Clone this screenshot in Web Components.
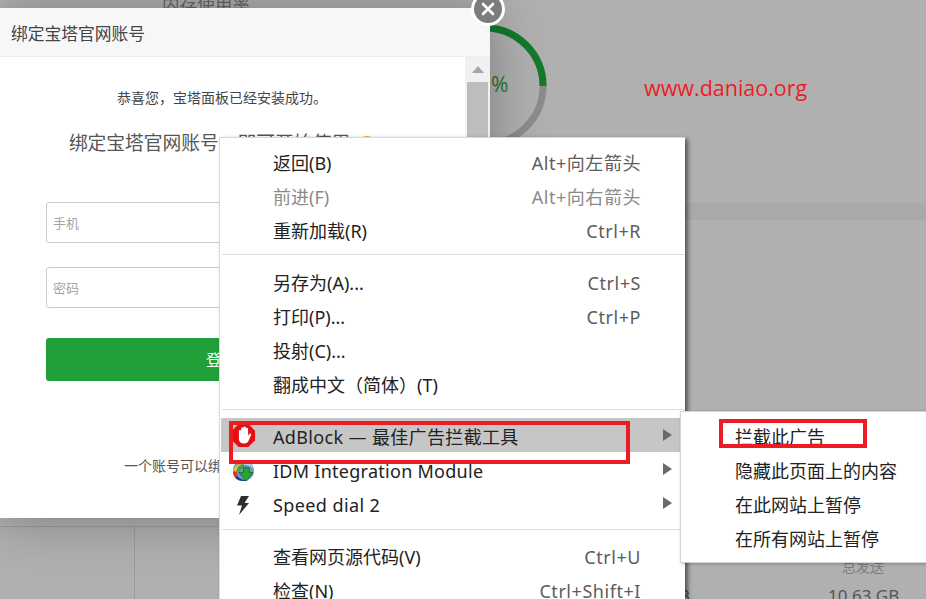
<!DOCTYPE html>
<html lang="zh">
<head>
<meta charset="utf-8">
<title>绑定宝塔官网账号</title>
<style>
  html, body { margin: 0; height: 100%; overflow: hidden; }
  body { width: 926px; height: 599px; position: relative; font-family: "Noto Sans", "Noto Sans CJK SC", sans-serif; }
</style>
</head>
<body>
<panel-backdrop></panel-backdrop>

<login-dialog title-text="绑定宝塔官网账号"></login-dialog>

<context-menu>
  <menu-row key="Alt+向左箭头">返回(B)</menu-row>
  <menu-row key="Alt+向右箭头" disabled>前进(F)</menu-row>
  <menu-row key="Ctrl+R">重新加载(R)</menu-row>
  <menu-sep style="--above:6px;--below:11px"></menu-sep>
  <menu-row key="Ctrl+S">另存为(A)...</menu-row>
  <menu-row key="Ctrl+P">打印(P)...</menu-row>
  <menu-row>投射(C)...</menu-row>
  <menu-row>翻成中文（简体）(T)</menu-row>
  <menu-sep></menu-sep>
  <menu-row arrow active style="letter-spacing:.35px">
    <svg slot="icon" width="25" height="25" viewBox="0 0 26 26">
      <polygon points="8,1 18,1 25,8 25,18 18,25 8,25 1,18 1,8" fill="#e60e12"/>
      <path d="M8.2 8.5a1.2 1.2 0 0 1 2.4 0V5.6a1.2 1.2 0 0 1 2.4 0v-.8a1.2 1.2 0 0 1 2.4 0v1.4a1.2 1.2 0 0 1 2.4 0v7.2l1-1.8c.8-1.2 2.6-.4 2 .9l-2.4 5.6c-.8 2-2.3 3.2-4.6 3.2h-1c-2.9 0-4.6-2-4.6-4.6z" fill="#fff"/>
    </svg>
    AdBlock — 最佳广告拦截工具
  </menu-row>
  <menu-row arrow style="letter-spacing:.27px">
    <svg slot="icon" width="25" height="25" viewBox="0 0 26 26" style="margin-top:2px">
      <circle cx="13" cy="12" r="11" fill="#6f98c8"/>
      <path d="M2 13c1-6 6-9 11-8-4 1-7 4-7 8z" fill="#e9c22c"/>
      <path d="M2 13c0 5 3 8 7 9-2-3-3-6-3-9z" fill="#d83a26"/>
      <path d="M4 19c3 4 9 5 13 3-4 0-8-1-10-4z" fill="#1f3f8f"/>
      <path d="M6 13c0-4 3-7 7-8l1 4c-3 0-5 2-5 4z" fill="#3fa34a"/>
      <path d="M13 2c5 0 9 3 10 8-3-3-6-4-10-4z" fill="#b9d2ea"/>
      <path d="M13 9h6v5h4l-7 9-8-9h5z" fill="#27a52c" stroke="#14691a" stroke-width=".8"/>
    </svg>
    IDM Integration Module
  </menu-row>
  <menu-row arrow style="letter-spacing:.4px">
    <svg slot="icon" width="24" height="24" viewBox="0 0 24 24">
      <path d="M10 5h8l-4.5 7H18L8 24l3-9.5H6z" fill="#2e2e2e"/>
    </svg>
    Speed dial 2
  </menu-row>
  <menu-sep></menu-sep>
  <menu-row key="Ctrl+U">查看网页源代码(V)</menu-row>
  <menu-row key="Ctrl+Shift+I">检查(N)</menu-row>
</context-menu>

<sub-menu>
  <menu-row plain>拦截此广告</menu-row>
  <menu-row plain>隐藏此页面上的内容</menu-row>
  <menu-row plain>在此网站上暂停</menu-row>
  <menu-row plain>在所有网站上暂停</menu-row>
</sub-menu>

<mark-box style="left:229px;top:421px;width:393px;height:35px"></mark-box>
<mark-box style="left:719px;top:419px;width:140px;height:21px"></mark-box>

<script>
const backdropTpl = document.createElement('template');
backdropTpl.innerHTML = `
  <style>
    :host {
      position: absolute; inset: 0;
      display: flex; flex-direction: column;
      background: #b0b0b0; overflow: hidden;
    }
    .top { height: 203px; position: relative; flex: none; }
    .title { position: absolute; left: 162px; top: -8px; font-size: 17.6px; line-height: 24px; color: #666; }
    .gauge { position: absolute; left: 423px; top: 24px; }
    .pct { position: absolute; left: 491px; top: 69px; font-size: 21px; line-height: 30px; color: #1c7a2c; font-family: "Open Sans", sans-serif; }
    .site { position: absolute; left: 644px; top: 71px; font-size: 21.5px; line-height: 34px; color: #ed1c24; font-family: "Open Sans", sans-serif; }
    .band { height: 17px; background: #a9a9a9; flex: none; }
    .rest { flex: 1; position: relative; }
    .line-h { position: absolute; left: 0; right: 0; top: 306px; height: 1px; background: #9b9ba0; }
    .line-v { position: absolute; left: 134px; top: 306px; bottom: 0; width: 1px; background: #9b9ba3; }
    .tot { position: absolute; left: 842px; top: 336px; font-size: 14px; line-height: 22px; color: #7d7d7d; }
    .num { position: absolute; top: 362px; font-size: 17px; line-height: 28px; color: #555; white-space: nowrap; }
    .num.a { left: 828px; }
    .num.b { right: 236px; }
  </style>
  <div class="top">
    <div class="title">内存使用率</div>
    <svg class="gauge" width="124" height="124" viewBox="0 0 124 124">
      <circle cx="62" cy="62" r="58" fill="none" stroke="#8c8c8c" stroke-width="7"/>
      <path d="M62 4A58 58 0 0 1 120 62" fill="none" stroke="#147a2b" stroke-width="7"/>
    </svg>
    <div class="pct">%</div>
    <div class="site">www.daniao.org</div>
  </div>
  <div class="band"></div>
  <div class="rest">
    <div class="line-h"></div>
    <div class="line-v"></div>
    <div class="tot">总发送</div>
    <div class="num b">9.31 GB</div>
    <div class="num a">10.63 GB</div>
  </div>
`;
class PanelBackdrop extends HTMLElement {
  constructor() {
    super();
    this.attachShadow({ mode: 'open' }).appendChild(backdropTpl.content.cloneNode(true));
  }
}
customElements.define('panel-backdrop', PanelBackdrop);

const dialogTpl = document.createElement('template');
dialogTpl.innerHTML = `
  <style>
    :host {
      position: absolute; left: 0; top: 8px; width: 490px; height: 510px;
      display: flex; flex-direction: column;
      background: #fff; box-shadow: 1px 1px 50px rgba(0,0,0,.3);
      color: #555; font-family: "Noto Sans CJK SC", sans-serif;
    }
    header {
      height: 49px; flex: none; box-sizing: border-box;
      padding-left: 11px; border-bottom: 1px solid #eee; background: #f7f7f7;
      font-size: 16.75px; line-height: 50px; color: #444;
    }
    .body { flex: 1; display: flex; min-height: 0; }
    .content { width: 444px; display: flex; flex-direction: column; align-items: center; flex: none; }
    .hint { margin-top: 28px; font-size: 14px; line-height: 24px; color: #444; }
    h2 { margin: 18px 0 0; font-weight: 400; font-size: 18.75px; line-height: 30px; color: #555; display: flex; align-items: center; white-space: nowrap; }
    .tip { width: 16px; height: 16px; border: 2px solid #f0a63c; border-radius: 50%; margin: 4px 0 0 9px; box-sizing: border-box; }
    .field {
      box-sizing: border-box; width: 352px; height: 41px; margin-top: 24px;
      border: 1px solid #ccc; border-radius: 3px; padding-left: 6px;
      font-size: 13px; line-height: 39px; color: #a4a4a4;
    }
    .field.first { margin-top: 45px; }
    .btn {
      width: 352px; height: 43px; margin-top: 30px; border-radius: 3px;
      background: #20a038; color: #fff; font-size: 16px; line-height: 43px; text-align: center;
    }
    .foot { margin-top: 72px; font-size: 14px; line-height: 24px; color: #555; }
    .bar { margin-left: 21px; width: 25px; flex: none; background: #f1f1f1; display: flex; flex-direction: column; align-items: center; }
    .up { margin-top: 9px; width: 0; height: 0; border: 6px solid transparent; border-top: 0; border-bottom: 7px solid #a6a6a6; }
    .thumb { margin-top: 9px; width: 21px; flex: 1; background: #bdbdbd; }
    .close {
      position: absolute; left: 471px; top: -16px; width: 34px; height: 34px; box-sizing: border-box;
      border: 3px solid #fff; border-radius: 50%; background: #7c7c7c;
      display: flex; align-items: center; justify-content: center;
    }
  </style>
  <header id="title"></header>
  <div class="body">
    <div class="content">
      <div class="hint">恭喜您，宝塔面板已经安装成功。</div>
      <h2>绑定宝塔官网账号，即可开始使用<span class="tip"></span></h2>
      <div class="field first">手机</div>
      <div class="field">密码</div>
      <div class="btn">登录</div>
      <div class="foot">一个账号可以绑定多台服务器。</div>
    </div>
    <div class="bar"><div class="up"></div><div class="thumb"></div></div>
  </div>
  <div class="close">
    <svg width="14" height="14" viewBox="0 0 14 14"><path d="M2 2l10 10M12 2L2 12" stroke="#fff" stroke-width="2.6" stroke-linecap="round"/></svg>
  </div>
`;
class LoginDialog extends HTMLElement {
  constructor() {
    super();
    this.attachShadow({ mode: 'open' }).appendChild(dialogTpl.content.cloneNode(true));
  }
  connectedCallback() {
    this.shadowRoot.getElementById('title').textContent = this.getAttribute('title-text');
  }
}
customElements.define('login-dialog', LoginDialog);

const menuTpl = document.createElement('template');
menuTpl.innerHTML = `
  <style>
    :host {
      position: absolute; left: 219px; top: 137px; width: 466px; height: 480px;
      box-sizing: border-box; padding: 8px 0 0 1px; display: block;
      background: #fff; border-left: 1px solid #d9d9d9; border-top: 1px solid #d9d9d9;
      box-shadow: 3px 2px 4px rgba(0,0,0,.5);
    }
  </style>
  <slot></slot>
`;
class ContextMenu extends HTMLElement {
  constructor() {
    super();
    this.attachShadow({ mode: 'open' }).appendChild(menuTpl.content.cloneNode(true));
  }
}
customElements.define('context-menu', ContextMenu);

const subTpl = document.createElement('template');
subTpl.innerHTML = `
  <style>
    :host {
      position: absolute; left: 680px; top: 411px; width: 250px; height: 152px;
      box-sizing: border-box; padding-top: 8px; display: block;
      background: #fff; border: 1px solid #d4d4d4;
      box-shadow: 1px 1px 3px rgba(0,0,0,.25);
    }
  </style>
  <slot></slot>
`;
class SubMenu extends HTMLElement {
  constructor() {
    super();
    this.attachShadow({ mode: 'open' }).appendChild(subTpl.content.cloneNode(true));
  }
}
customElements.define('sub-menu', SubMenu);

const rowTpl = document.createElement('template');
rowTpl.innerHTML = `
  <style>
    :host {
      display: flex; align-items: center; height: 34px; padding: 0 44px 0 52px;
      box-sizing: border-box; position: relative; z-index: 0;
      font-size: 18px; line-height: 34px; color: #222; white-space: nowrap;
    }
    :host([plain]) { padding: 0 0 0 54px; }
    :host([disabled]) { color: #8a8a8a; }
    /* the highlight sits a little above the row's text */
    :host([active]) { margin-right: 4px; }
    :host([active])::before {
      content: ""; position: absolute; z-index: -1;
      left: 0; right: 0; top: -2px; height: 34px; background: #c6c6c6;
    }
    .icon { position: absolute; left: 10px; top: 3px; width: 26px; height: 26px; }
    .label { flex: 1; }
    .key { color: #5c5c5c; letter-spacing: .55px; }
    :host([disabled]) .key { color: #8a8a8a; }
    .arrow {
      display: none; position: absolute; right: 13px; top: 9px;
      border-left: 9px solid #6a6a6a; border-top: 6px solid transparent; border-bottom: 6px solid transparent;
    }
    :host([arrow]) .arrow { display: block; }
    :host([active]) .arrow { right: 9px; }
  </style>
  <div class="icon"><slot name="icon"></slot></div>
  <div class="label"><slot></slot></div>
  <div class="key"></div>
  <div class="arrow"></div>
`;
class MenuRow extends HTMLElement {
  constructor() {
    super();
    this.attachShadow({ mode: 'open' }).appendChild(rowTpl.content.cloneNode(true));
  }
  connectedCallback() {
    this.shadowRoot.querySelector('.key').textContent = this.getAttribute('key') || '';
  }
}
customElements.define('menu-row', MenuRow);

const sepTpl = document.createElement('template');
sepTpl.innerHTML = `
  <style>
    :host { display: block; height: 1px; margin: var(--above, 7px) 0 var(--below, 10px) 1px; background: #dcdcdc; }
  </style>
`;
class MenuSep extends HTMLElement {
  constructor() {
    super();
    this.attachShadow({ mode: 'open' }).appendChild(sepTpl.content.cloneNode(true));
  }
}
customElements.define('menu-sep', MenuSep);

const markTpl = document.createElement('template');
markTpl.innerHTML = `
  <style>
    :host { position: absolute; display: block; border: 4px solid #ed1c24; pointer-events: none; }
  </style>
`;
class MarkBox extends HTMLElement {
  constructor() {
    super();
    this.attachShadow({ mode: 'open' }).appendChild(markTpl.content.cloneNode(true));
  }
}
customElements.define('mark-box', MarkBox);
</script>
</body>
</html>
